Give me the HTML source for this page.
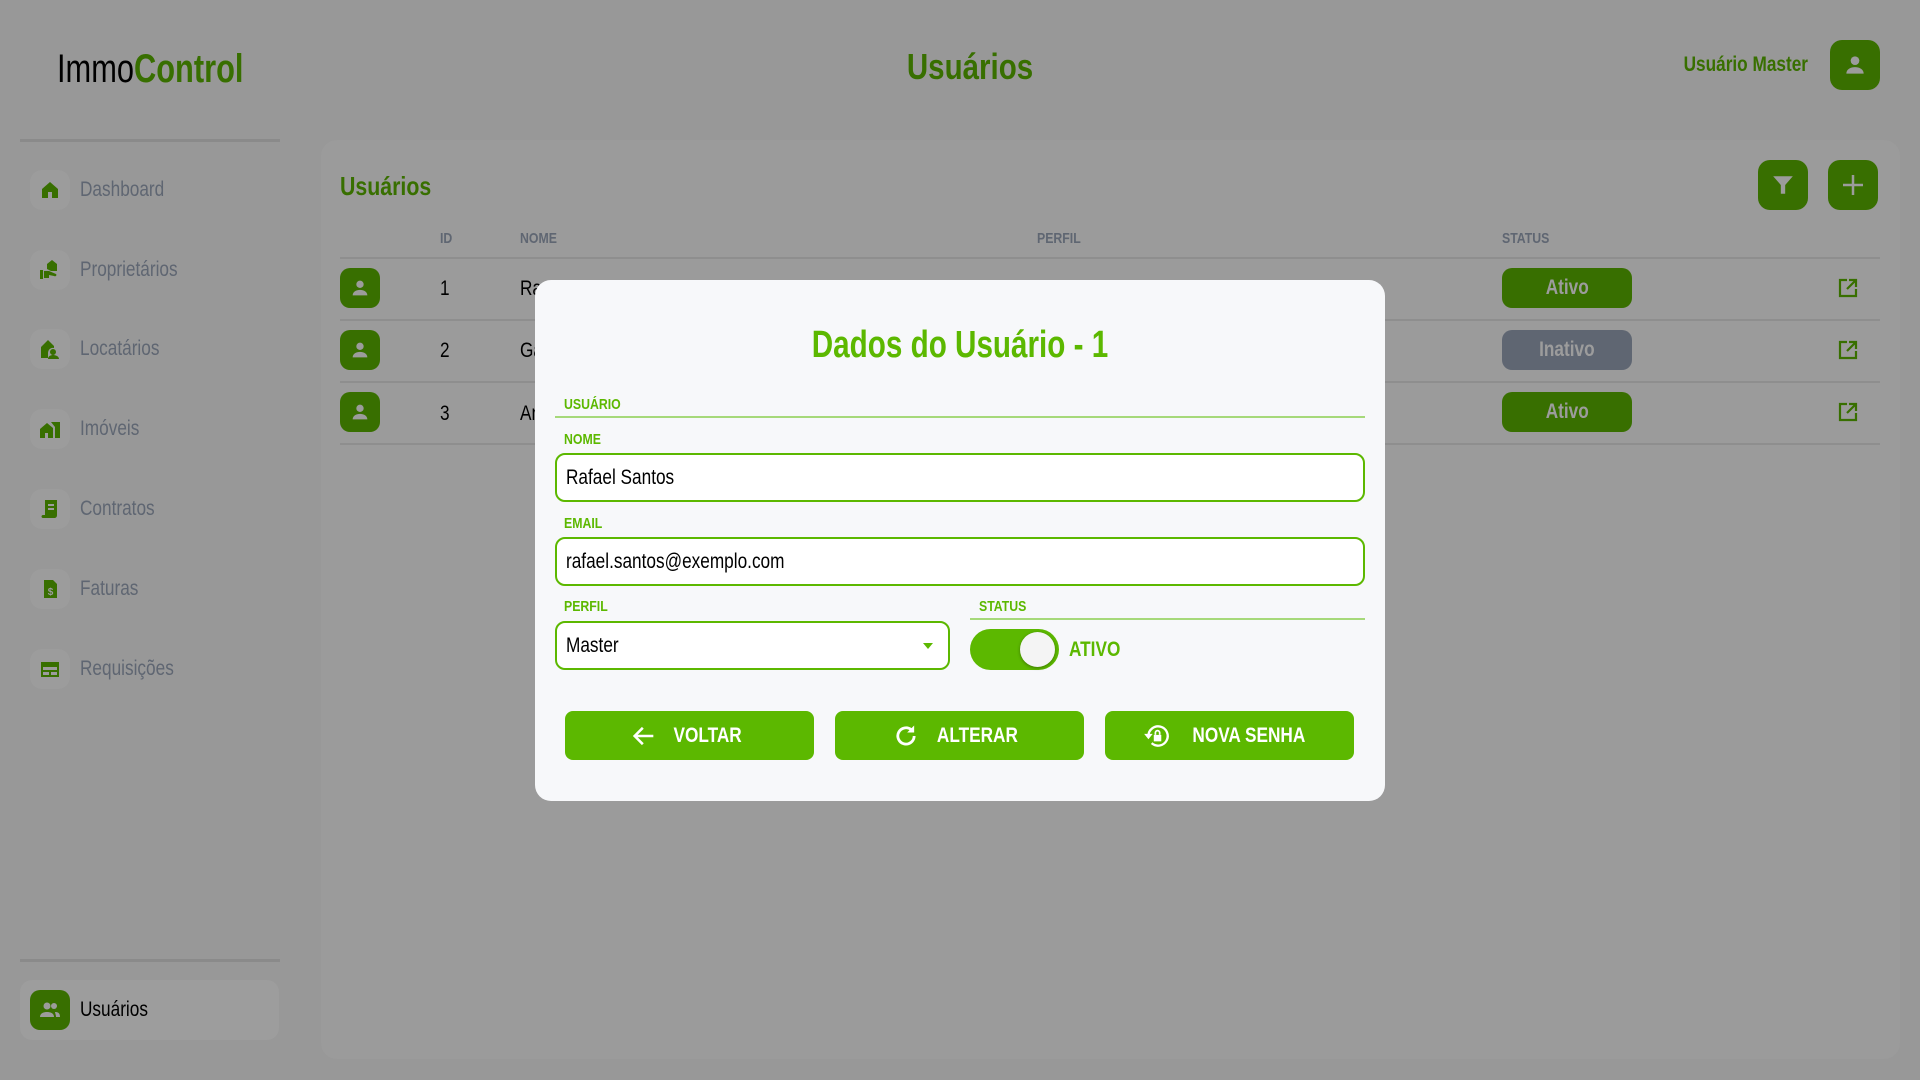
<!DOCTYPE html>
<html><head><meta charset="utf-8"><style>
*{box-sizing:border-box;margin:0;padding:0}
body{width:1920px;height:1080px;background:#989898;font-family:"Liberation Sans Narrow","Liberation Sans",sans-serif;position:relative;overflow:hidden}
.a{position:absolute}
.L{transform:scaleX(.82);transform-origin:left center}
.C{transform:scaleX(.82);transform-origin:center center}
.R{transform:scaleX(.82);transform-origin:right center}
.g{color:#386f00}
.logo{left:57px;top:47px;font-size:40px;color:#000;white-space:nowrap;transform:scaleX(.77);transform-origin:left center}
.logo b{color:#386f00}
.hr{height:3px;background:#8a8a8a}
.nav{left:30px;width:250px;height:40px;display:flex;align-items:center}
.nav .ib{width:40px;height:40px;border-radius:12px;background:#9c9c9c;display:flex;align-items:center;justify-content:center}
.nav span{margin-left:10px;font-size:21px;color:#5f6672;display:inline-block;transform:scaleX(.82);transform-origin:left center;white-space:nowrap}
.box{border-radius:10px;background:#386f00;display:flex;align-items:center;justify-content:center}
.th{top:230px;font-size:15px;font-weight:bold;color:#5f6672}
.line{left:340px;width:1540px;height:2px;background:#8e8e8e}
.td{font-size:21px;color:#000}
.pill{left:1502px;width:130px;height:40px;border-radius:10px;background:#386f00;color:#9c9c9c;font-weight:bold;font-size:21px;display:flex;align-items:center;justify-content:center}
.pill span{display:inline-block;transform:scaleX(.82)}
.modal{left:535px;top:280px;width:850px;height:521px;background:#f7f8fa;border-radius:16px}
.lbl{font-size:15px;font-weight:bold;color:#5cb800}
.inp{left:555px;width:810px;height:49px;border:2px solid #5cb800;border-radius:10px;background:#fff;font-size:21px;padding-left:9px;display:flex;align-items:center;color:#000}
.inp span{display:inline-block;transform:scaleX(.82);transform-origin:left center;white-space:nowrap}
.btn{top:711px;width:249px;height:49px;border-radius:8px;background:#5cb800;color:#fff;font-weight:bold;font-size:21px;display:flex;align-items:center;justify-content:center;gap:8px}
.btn span{display:inline-block;transform:scaleX(.82);white-space:nowrap}
</style></head><body>
<div class="a logo">Immo<b>Control</b></div>
<div class="a hr" style="left:20px;top:139px;width:260px"></div>
<div class="a hr" style="left:20px;top:959px;width:260px"></div>

<div class="a nav" style="top:170px"><div class="ib"><svg width="20" height="20" viewBox="0 0 20 20"><path d="M10 2L2 9v9h6v-6h4v6h6V9z" fill="#386f00"/></svg></div><span>Dashboard</span></div>
<div class="a nav" style="top:250px"><div class="ib"><svg width="22" height="22" viewBox="0 0 22 22"><path d="M1 11h3v9H1zM5 12h5l7 3c1 1 0 3-2 2l-5-1v3H5z M8 10V5l5-4 5 4v7h-6z" fill="#386f00"/></svg></div><span>Proprietários</span></div>
<div class="a nav" style="top:329px"><div class="ib"><svg width="22" height="22" viewBox="0 0 22 22"><path d="M2 20V9l7-7 6 6v2a5 5 0 0 0-6 5v5z M14 11a3 3 0 1 1 0 6a3 3 0 1 1 0-6z M9 21c0-3 3-4 5-4s6 1 6 4z" fill="#386f00"/></svg></div><span>Locatários</span></div>
<div class="a nav" style="top:409px"><div class="ib"><svg width="22" height="22" viewBox="0 0 22 22"><path d="M1 11l7-6 6 5v10H9v-5H6v5H1z M12 4h9v16h-5V9z" fill="#386f00"/></svg></div><span>Imóveis</span></div>
<div class="a nav" style="top:489px"><div class="ib"><svg width="22" height="22" viewBox="0 0 22 22"><path d="M6 2h12v15c0 2-1 3-3 3H4c-2 0-2-3 0-3h2z M9 6v2h6V6z M9 10v2h6v-2z" fill="#386f00" fill-rule="evenodd"/></svg></div><span>Contratos</span></div>
<div class="a nav" style="top:569px"><div class="ib"><svg width="22" height="22" viewBox="0 0 22 22"><path d="M5 2h9l4 4v14H5z" fill="#386f00"/><text x="11.5" y="17" font-size="10" font-weight="bold" fill="#9c9c9c" text-anchor="middle" font-family="Liberation Sans">$</text></svg></div><span>Faturas</span></div>
<div class="a nav" style="top:649px"><div class="ib"><svg width="22" height="22" viewBox="0 0 22 22"><path d="M2 4h18v15H2z M4 9v3h14V9z M4 14v3h6v-3z M12 14v3h6v-3z" fill="#386f00" fill-rule="evenodd"/></svg></div><span>Requisições</span></div>

<div class="a" style="left:20px;top:980px;width:259px;height:60px;border-radius:12px;background:#9d9d9d"></div>
<div class="a box" style="left:30px;top:990px;width:40px;height:40px"><svg width="24" height="24" viewBox="0 0 24 24"><circle cx="9" cy="8" r="3.5" fill="#9c9c9c"/><path d="M2 19c0-4 4-5 7-5s7 1 7 5z" fill="#9c9c9c"/><circle cx="16" cy="8" r="3" fill="#9c9c9c"/><path d="M17 14c3 0 5 1 5 5h-4c0-2-1-4-1-5z" fill="#9c9c9c"/></svg></div>
<div class="a L" style="left:80px;top:998px;font-size:21px;color:#000">Usuários</div>

<div class="a g C" style="left:870px;top:46px;width:200px;text-align:center;font-size:36px;font-weight:bold">Usuários</div>
<div class="a g R" style="left:1558px;top:53px;width:250px;text-align:right;font-size:21px;font-weight:bold">Usuário Master</div>
<div class="a box" style="left:1830px;top:40px;width:50px;height:50px;border-radius:12px"><svg width="26" height="26" viewBox="0 0 24 24"><circle cx="12" cy="8" r="4" fill="#9c9c9c"/><path d="M4 20c0-4 4-6 8-6s8 2 8 6z" fill="#9c9c9c"/></svg></div>

<div class="a" style="left:321px;top:140px;width:1579px;height:919px;border-radius:16px;background:#9b9b9b"></div>
<div class="a g L" style="left:340px;top:171px;font-size:26px;font-weight:bold">Usuários</div>
<div class="a box" style="left:1758px;top:160px;width:50px;height:50px;border-radius:12px"><svg width="24" height="24" viewBox="0 0 22 22"><path d="M2 3h18l-7 8v8h-4v-8z" fill="#9c9c9c"/></svg></div>
<div class="a box" style="left:1828px;top:160px;width:50px;height:50px;border-radius:12px"><svg width="24" height="24" viewBox="0 0 24 24"><path d="M12 2v20M2 12h20" stroke="#9c9c9c" stroke-width="2.5"/></svg></div>

<div class="a th L" style="left:440px">ID</div>
<div class="a th L" style="left:520px">NOME</div>
<div class="a th L" style="left:1037px">PERFIL</div>
<div class="a th L" style="left:1502px">STATUS</div>
<div class="a line" style="top:257px"></div>
<div class="a line" style="top:319px"></div>
<div class="a line" style="top:381px"></div>
<div class="a line" style="top:443px"></div>

<div class="a box" style="left:340px;top:268px;width:40px;height:40px"><svg width="22" height="22" viewBox="0 0 24 24"><circle cx="12" cy="8" r="4" fill="#9c9c9c"/><path d="M4 20c0-4 4-6 8-6s8 2 8 6z" fill="#9c9c9c"/></svg></div>
<div class="a box" style="left:340px;top:330px;width:40px;height:40px"><svg width="22" height="22" viewBox="0 0 24 24"><circle cx="12" cy="8" r="4" fill="#9c9c9c"/><path d="M4 20c0-4 4-6 8-6s8 2 8 6z" fill="#9c9c9c"/></svg></div>
<div class="a box" style="left:340px;top:392px;width:40px;height:40px"><svg width="22" height="22" viewBox="0 0 24 24"><circle cx="12" cy="8" r="4" fill="#9c9c9c"/><path d="M4 20c0-4 4-6 8-6s8 2 8 6z" fill="#9c9c9c"/></svg></div>
<div class="a td L" style="left:440px;top:277px">1</div><div class="a td L" style="left:520px;top:277px">Ra</div>
<div class="a td L" style="left:440px;top:339px">2</div><div class="a td L" style="left:520px;top:339px">Ga</div>
<div class="a td L" style="left:440px;top:402px">3</div><div class="a td L" style="left:520px;top:402px">An</div>
<div class="a pill" style="top:268px"><span>Ativo</span></div>
<div class="a pill" style="top:330px;background:#5f6672"><span>Inativo</span></div>
<div class="a pill" style="top:392px"><span>Ativo</span></div>
<svg class="a" style="left:1838px;top:278px" width="20" height="20" viewBox="0 0 20 20"><path d="M9 2H2v16h16v-7M11 2h7v7M18 2l-9 9" fill="none" stroke="#386f00" stroke-width="2.2"/></svg>
<svg class="a" style="left:1838px;top:340px" width="20" height="20" viewBox="0 0 20 20"><path d="M9 2H2v16h16v-7M11 2h7v7M18 2l-9 9" fill="none" stroke="#386f00" stroke-width="2.2"/></svg>
<svg class="a" style="left:1838px;top:402px" width="20" height="20" viewBox="0 0 20 20"><path d="M9 2H2v16h16v-7M11 2h7v7M18 2l-9 9" fill="none" stroke="#386f00" stroke-width="2.2"/></svg>

<div class="a modal"></div>
<div class="a" style="left:535px;top:324px;width:850px;text-align:center;font-size:38px;font-weight:bold;color:#5cb800;transform:scaleX(.78);transform-origin:center">Dados do Usuário - 1</div>
<div class="a lbl L" style="left:564px;top:396px">USUÁRIO</div>
<div class="a" style="left:555px;top:416px;width:810px;height:2px;background:#a6d97a"></div>
<div class="a lbl L" style="left:564px;top:431px">NOME</div>
<div class="a inp" style="top:453px"><span>Rafael Santos</span></div>
<div class="a lbl L" style="left:564px;top:515px">EMAIL</div>
<div class="a inp" style="top:537px"><span>rafael.santos@exemplo.com</span></div>
<div class="a lbl L" style="left:564px;top:598px">PERFIL</div>
<div class="a lbl L" style="left:979px;top:598px">STATUS</div>
<div class="a" style="left:970px;top:618px;width:395px;height:2px;background:#a6d97a"></div>
<div class="a inp" style="top:621px;width:395px"><span>Master</span></div>
<svg class="a" style="left:922px;top:642px" width="12" height="8" viewBox="0 0 12 8"><path d="M1 1h10L6 7z" fill="#5cb800"/></svg>
<div class="a" style="left:970px;top:629px;width:89px;height:41px;border-radius:21px;background:#5cb800"></div>
<div class="a" style="left:1020px;top:632px;width:35px;height:35px;border-radius:50%;background:#f4f4f4;box-shadow:0 1px 3px rgba(0,0,0,.35)"></div>
<div class="a L" style="left:1069px;top:638px;font-size:21px;font-weight:bold;color:#5cb800">ATIVO</div>

<div class="a btn" style="left:565px"><svg width="28" height="28" viewBox="0 0 24 24"><path d="M20 12H5M11 5l-7 7 7 7" fill="none" stroke="#fff" stroke-width="2.2"/></svg><span>VOLTAR</span></div>
<div class="a btn" style="left:835px"><svg width="28" height="28" viewBox="0 0 24 24"><path d="M19 12a7 7 0 1 1-2.5-5.4" fill="none" stroke="#fff" stroke-width="2.4"/><path d="M19 3v6h-6z" fill="#fff"/></svg><span>ALTERAR</span></div>
<div class="a btn" style="left:1105px"><svg width="30" height="30" viewBox="0 0 28 28"><path d="M6 14a9 9 0 1 1 3 6.7" fill="none" stroke="#fff" stroke-width="2.2"/><path d="M2 12h8l-4 5z" fill="#fff"/><rect x="11" y="13" width="7" height="6" fill="#fff"/><path d="M12.5 13v-2a2 2 0 0 1 4 0v2" fill="none" stroke="#fff" stroke-width="1.6"/></svg><span>NOVA SENHA</span></div>
</body></html>
